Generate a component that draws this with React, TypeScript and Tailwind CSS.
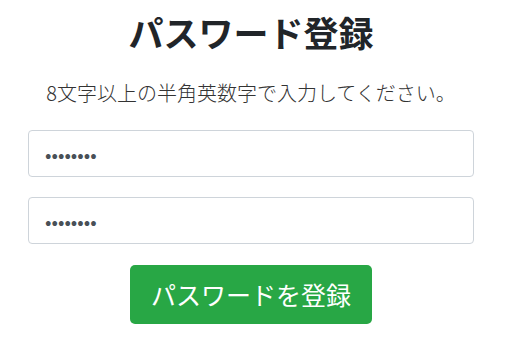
import { useState } from 'react'

export default function App() {
  const [password, setPassword] = useState('abcd1234')
  const [confirm, setConfirm] = useState('abcd1234')

  return (
    <div
      className="min-h-screen bg-white text-[#212529]"
      style={{ fontFamily: '"Noto Sans CJK JP", "Noto Sans", sans-serif' }}
    >
      <div className="ml-[28px] flex w-[446px] flex-col items-center pt-[8px]">
        <h1 className="text-[35px] font-bold leading-[48px]">パスワード登録</h1>
        <p className="mt-[23px] text-[20px] font-light leading-[28px] text-[#333]">
          8文字以上の半角英数字で入力してください。
        </p>

        <form className="mt-[23px] flex w-full flex-col items-center">
          <input
            type="password"
            value={password}
            onChange={(e) => setPassword(e.target.value)}
            className="h-[47px] w-full rounded-[4px] border border-[#ced4da] px-[16px] text-[19px] text-[#495057] outline-none"
          />
          <input
            type="password"
            value={confirm}
            onChange={(e) => setConfirm(e.target.value)}
            className="mt-[20px] h-[47px] w-full rounded-[4px] border border-[#ced4da] px-[16px] text-[19px] text-[#495057] outline-none"
          />
          <button
            type="button"
            className="mt-[21px] h-[59px] w-[242px] rounded-[5px] bg-[#28a745] text-[25px] text-white"
          >
            パスワードを登録
          </button>
        </form>
      </div>
    </div>
  )
}
